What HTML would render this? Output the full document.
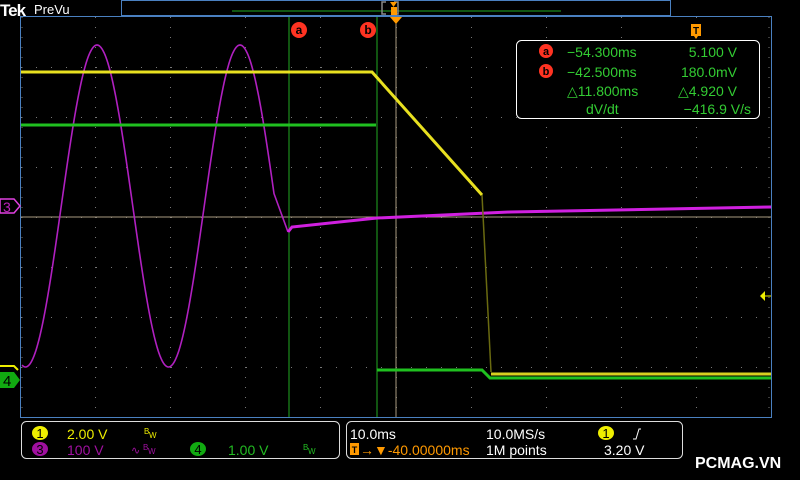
<!DOCTYPE html>
<html><head><meta charset="utf-8"><style>
body{margin:0;background:#000;width:800px;height:480px;overflow:hidden;font-family:"Liberation Sans",sans-serif}
svg{position:absolute;left:0;top:0}
text{font-family:"Liberation Sans",sans-serif}
</style></head><body>
<svg width="800" height="480" xmlns="http://www.w3.org/2000/svg">
<rect width="800" height="480" fill="#000"/>
<rect x="121.5" y="0.5" width="549" height="15" fill="none" stroke="#4a80c0"/>
<line x1="232" y1="11" x2="561" y2="11" stroke="#2a2" stroke-width="1"/>
<path d="M386 2h-4v12h4M394 2h4v12h-4" fill="none" stroke="#888" stroke-width="1.5"/>
<rect x="391" y="7" width="6" height="8" fill="#f90"/>
<path d="M390 2h7l-3.5 5z" fill="#f90"/>
<text x="0" y="16" fill="#fff" font-size="17" font-weight="bold" font-family="Liberation Serif" letter-spacing="-1">Tek</text>
<text x="34" y="14" fill="#fff" font-size="13">PreVu</text>
<g id="grid"></g>
<rect x="20.5" y="16.5" width="751" height="401" fill="none" stroke="#4a80c0"/>
<line x1="21" y1="217" x2="771" y2="217" stroke="#a89a80" stroke-width="1"/>
<line x1="396" y1="17" x2="396" y2="417" stroke="#a89a80" stroke-width="1"/>
<line x1="289" y1="17" x2="289" y2="417" stroke="#2a2" stroke-width="1"/>
<line x1="377" y1="17" x2="377" y2="417" stroke="#2a2" stroke-width="1"/>
<path d="M390 17h12l-6 7z" fill="#f90"/>
<polyline id="sine" fill="none" stroke="#b020c0" stroke-width="1.6"/>
<polyline points="288,232 292,227 377,218 510,212 771,207" fill="none" stroke="#d020e0" stroke-width="3"/>
<polyline points="21,72 372,72 482,195" fill="none" stroke="#e8e020" stroke-width="3"/>
<polyline points="482,195 491,372" fill="none" stroke="#6a6a10" stroke-width="1.5"/>
<polyline points="491,374 771,374" fill="none" stroke="#d8d020" stroke-width="3"/>
<polyline points="21,125 376,125" fill="none" stroke="#20c020" stroke-width="3"/>
<polyline points="377,370 482,370 490,378 771,378" fill="none" stroke="#20c020" stroke-width="3"/>
<path d="M0 199h14l6 7-6 7h-14z" fill="#000" stroke="#e040e0" stroke-width="1.5"/>
<text x="3" y="212" fill="#c020c0" font-size="14">3</text>
<path d="M0 366h14l4 4" fill="none" stroke="#ee0" stroke-width="2"/>
<path d="M0 372h14l6 8-6 8h-14z" fill="#1a1"/>
<text x="3" y="386" fill="#000" font-size="15">4</text>
<path d="M760 296l5-5v10z" fill="#ee0"/><line x1="764" y1="296" x2="771" y2="296" stroke="#ee0"/>
<circle cx="299" cy="30" r="8" fill="#f32"/><text x="299" y="34" text-anchor="middle" fill="#000" font-size="12" font-weight="bold">a</text>
<circle cx="368" cy="30" r="8" fill="#f32"/><text x="368" y="34" text-anchor="middle" fill="#000" font-size="12" font-weight="bold">b</text>
<rect x="691" y="24" width="10" height="12" fill="#f90"/><path d="M694 36h4l-2 3z" fill="#f90"/>
<text x="696" y="34" text-anchor="middle" fill="#000" font-size="10" font-weight="bold">T</text>
<rect x="516.5" y="40.5" width="243" height="78" rx="5" fill="#000" stroke="#fff"/>
<circle cx="546" cy="51" r="7" fill="#f32"/><text x="546" y="55" text-anchor="middle" fill="#000" font-size="11" font-weight="bold">a</text>
<circle cx="546" cy="71" r="7" fill="#f32"/><text x="546" y="75" text-anchor="middle" fill="#000" font-size="11" font-weight="bold">b</text>
<g fill="#3c3" font-size="14">
<text x="567" y="57">−54.300ms</text><text x="737" y="57" text-anchor="end">5.100 V</text>
<text x="567" y="77">−42.500ms</text><text x="737" y="77" text-anchor="end">180.0mV</text>
<text x="567" y="96">△11.800ms</text><text x="737" y="96" text-anchor="end">△4.920 V</text>
<text x="586" y="114">dV/dt</text><text x="751" y="114" text-anchor="end">−416.9 V/s</text>
</g>
<rect x="21.5" y="421.5" width="318" height="37" rx="5" fill="none" stroke="#ddd"/>
<rect x="346.5" y="421.5" width="336" height="37" rx="5" fill="none" stroke="#ddd"/>
<g font-size="14">
<ellipse cx="40" cy="433" rx="8" ry="7" fill="#ee0"/><text x="40" y="438" text-anchor="middle" fill="#000" font-size="13">1</text>
<text x="67" y="439" fill="#ee0">2.00 V</text>
<text x="144" y="434" fill="#ee0" font-size="8">B</text><text x="149" y="438" fill="#ee0" font-size="8">W</text>
<ellipse cx="40" cy="449" rx="8" ry="7" fill="#a010a0"/><text x="40" y="454" text-anchor="middle" fill="#000" font-size="13">3</text>
<text x="67" y="455" fill="#a010a0">100 V</text>
<text x="131" y="454" fill="#a010a0" font-size="11">∿</text><text x="143" y="450" fill="#a010a0" font-size="8">B</text><text x="148" y="454" fill="#a010a0" font-size="8">W</text>
<ellipse cx="198" cy="449" rx="8" ry="7" fill="#1a1"/><text x="198" y="454" text-anchor="middle" fill="#000" font-size="13">4</text>
<text x="228" y="455" fill="#2b2">1.00 V</text>
<text x="303" y="450" fill="#2b2" font-size="8">B</text><text x="308" y="454" fill="#2b2" font-size="8">W</text>
<text x="350" y="439" fill="#fff">10.0ms</text>
<text x="486" y="439" fill="#fff">10.0MS/s</text>
<ellipse cx="606" cy="433" rx="8" ry="7" fill="#ee0"/><text x="606" y="438" text-anchor="middle" fill="#000" font-size="13">1</text>
<path d="M633 439h3l3-10h2" fill="none" stroke="#fff"/>
<rect x="350" y="443" width="9" height="12" fill="#f90"/><text x="354.5" y="453" text-anchor="middle" fill="#000" font-size="9" font-weight="bold">T</text>
<text x="360" y="455" fill="#f90">→▼-40.00000ms</text>
<text x="486" y="455" fill="#fff">1M points</text>
<text x="604" y="455" fill="#fff">3.20 V</text>
</g>
<text x="695" y="468" fill="#fff" font-size="16" font-weight="bold">PCMAG.VN</text>
</svg>
<script>
var g=document.getElementById("grid"),s="";
for(var k=1;k<10;k++){var x=Math.round(20+75.1*k)+0.5;s+='<line x1="'+x+'" y1="17" x2="'+x+'" y2="417" stroke="#777" stroke-dasharray="1 9"/>';}
for(var k=1;k<8;k++){var y=17+50*k+0.5;s+='<line x1="21" y1="'+y+'" x2="771" y2="'+y+'" stroke="#777" stroke-dasharray="1 14"/>';}
s+='<line x1="22" y1="17" x2="22" y2="417" stroke="#777" stroke-dasharray="1 9"/><line x1="769" y1="17" x2="769" y2="417" stroke="#777" stroke-dasharray="1 9"/>';
g.innerHTML=s;
var p=[];for(var x=22;x<=274;x+=1){p.push(x+","+(206-161*Math.cos(2*Math.PI*(x-97)/143)).toFixed(1));}
p.push("288,232");document.getElementById("sine").setAttribute("points",p.join(" "));
</script>
</body></html>
